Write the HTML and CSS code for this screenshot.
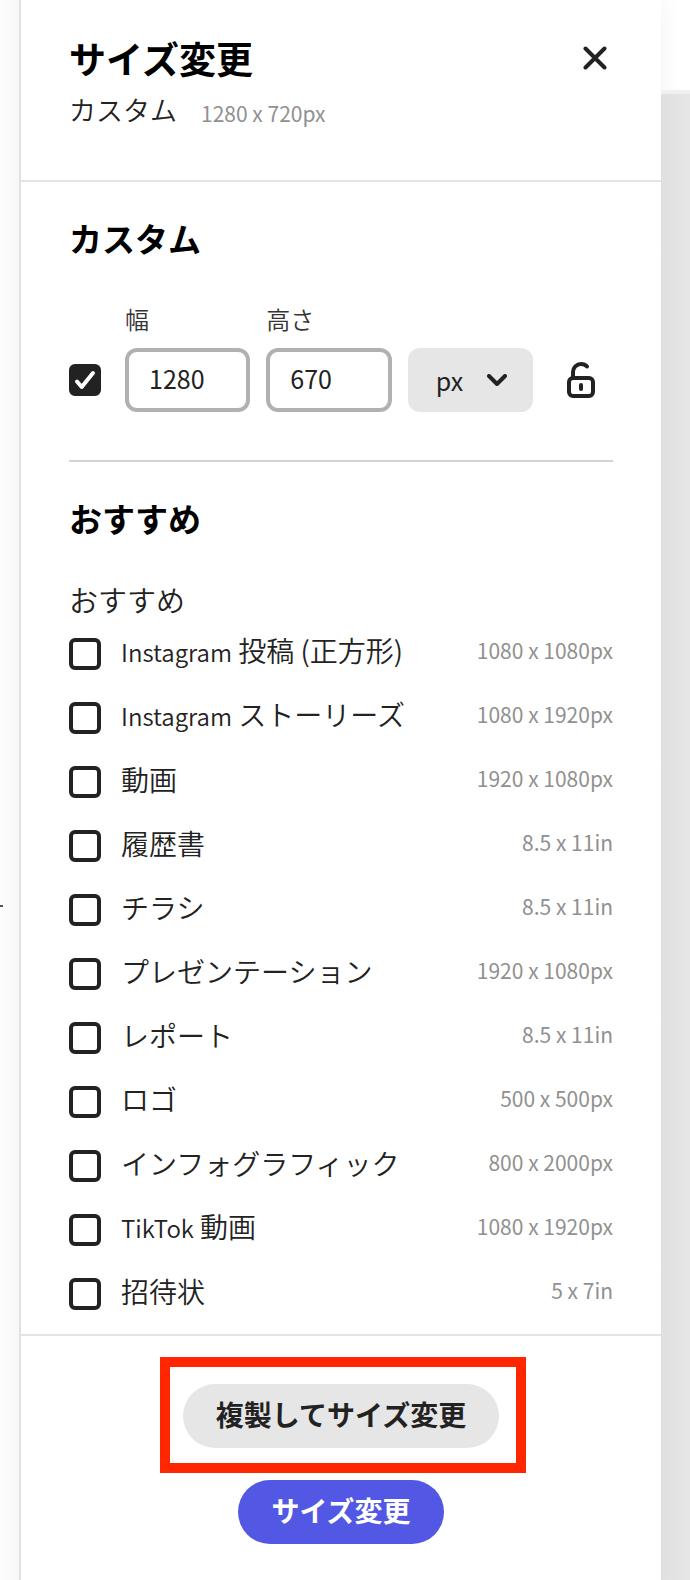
FILE: index.html
```html
<!DOCTYPE html>
<html lang="ja">

<head>
  <meta charset="UTF-8">
  <meta name="viewport" content="width=device-width, initial-scale=1.0">
  <title>サイズ変更</title>
  <link rel="stylesheet" href="styles.css">
</head>

<body>
  <div class="rail"><span class="rail-mark"></span></div>

  <main class="panel">
    <header class="panel-header">
      <div>
        <h1>サイズ変更</h1>
        <p class="current"><span>カスタム</span><span class="current-size">1280 x 720px</span></p>
      </div>
      <button type="button" class="close" aria-label="閉じる">
        <svg width="24" height="24" viewBox="0 0 24 24">
          <path d="M2.5 2.5 21.5 21.5M21.5 2.5 2.5 21.5" />
        </svg>
      </button>
    </header>

    <form class="panel-form">
      <div class="panel-body">
        <section class="custom">
          <h2>カスタム</h2>
          <div class="custom-row">
            <span class="check">
              <input type="checkbox" aria-label="カスタム" checked>
              <svg width="32" height="32" viewBox="0 0 32 32">
                <path d="M8 17.5 12.7 23 24 9" />
              </svg>
            </span>
            <div class="field">
              <label for="width">幅</label>
              <input type="text" id="width" name="width" value="1280">
            </div>
            <div class="field">
              <label for="height">高さ</label>
              <input type="text" id="height" name="height" value="670">
            </div>
            <div class="unit">
              <select name="unit" aria-label="単位">
                <option>px</option>
                <option>in</option>
              </select>
              <svg width="20" height="12" viewBox="0 0 20 12">
                <path d="M2 2 10 10 18 2" />
              </svg>
            </div>
            <button type="button" class="lock" aria-label="縦横比を固定">
              <svg width="28" height="36" viewBox="0 0 28 36">
                <rect x="2" y="16" width="24" height="18" rx="4" />
                <path d="M6 15.5V10C6 5.5 9.5 2 14 2c2.600 0 4.500 0.800 6 2.500" />
                <path d="M14 23v4" />
              </svg>
            </button>
          </div>
        </section>

        <section class="recommended">
          <h2>おすすめ</h2>
          <h3>おすすめ</h3>
          <ul class="sizes">
            <li><label><input type="checkbox"><span class="name"><span class="latin">Instagram</span> 投稿 (正方形)</span><span class="size">1080 x 1080px</span></label></li>
            <li><label><input type="checkbox"><span class="name"><span class="latin">Instagram</span> ストーリーズ</span><span class="size">1080 x 1920px</span></label></li>
            <li><label><input type="checkbox"><span class="name">動画</span><span class="size">1920 x 1080px</span></label></li>
            <li><label><input type="checkbox"><span class="name">履歴書</span><span class="size">8.5 x 11in</span></label></li>
            <li><label><input type="checkbox"><span class="name">チラシ</span><span class="size">8.5 x 11in</span></label></li>
            <li><label><input type="checkbox"><span class="name">プレゼンテーション</span><span class="size">1920 x 1080px</span></label></li>
            <li><label><input type="checkbox"><span class="name">レポート</span><span class="size">8.5 x 11in</span></label></li>
            <li><label><input type="checkbox"><span class="name">ロゴ</span><span class="size">500 x 500px</span></label></li>
            <li><label><input type="checkbox"><span class="name">インフォグラフィック</span><span class="size">800 x 2000px</span></label></li>
            <li><label><input type="checkbox"><span class="name"><span class="latin">TikTok</span> 動画</span><span class="size">1080 x 1920px</span></label></li>
            <li><label><input type="checkbox"><span class="name">招待状</span><span class="size">5 x 7in</span></label></li>
          </ul>
        </section>
      </div>

      <footer class="panel-footer">
        <div class="highlight">
          <button type="button" class="btn btn-secondary">複製してサイズ変更</button>
        </div>
        <button type="button" class="btn btn-primary">サイズ変更</button>
      </footer>
    </form>
  </main>

  <div class="canvas"></div>
</body>

</html>
```

FILE: styles.css
```css
* {
  box-sizing: border-box;
}

body {
  display: flex;
  min-height: 100vh;
  margin: 0;
  background-color: #fff;
  color: #222;
  font-family: "Noto Sans CJK JP", sans-serif;
  font-size: 28px;
}

h1,
h2,
h3,
p,
ul {
  margin: 0;
  padding: 0;
}

svg {
  display: block;
  fill: none;
  stroke: #222;
  stroke-width: 4;
  stroke-linecap: round;
  stroke-linejoin: round;
}

button,
input,
select {
  margin: 0;
  font-family: inherit;
  color: inherit;
}

/* page behind the panel */
.rail {
  position: relative;
  flex: 0 0 19px;
  background: linear-gradient(to right, #fdfdfd, #f8f8f8);
}

.rail-mark {
  position: absolute;
  top: 905px;
  left: 0;
  width: 3px;
  height: 2px;
  background-color: #555;
}

.canvas {
  flex: 0 0 29px;
  margin-top: 90px;
  border-top: 4px solid #f0f0f0;
  background: linear-gradient(to right, #e0e0e0, #e6e6e6);
}

.panel {
  flex: 1;
  border-left: 2px solid #e1e1e1;
  background-color: #fff;
  box-shadow: 0 0 24px rgba(0, 0, 0, 0.06);
}

.panel-header {
  display: flex;
  justify-content: space-between;
  align-items: flex-start;
  padding: 34px 48px 50px;
  border-bottom: 2px solid #e4e4e4;
}

h1 {
  font-size: 37px;
  font-weight: 700;
  line-height: 48px;
  color: #000;
}

.current {
  display: flex;
  align-items: center;
  gap: 24px;
  height: 40px;
  margin-top: 8px;
  font-size: 27px;
  font-weight: 350;
  line-height: 40px;
}

.current-size {
  padding-top: 6px;
  font-size: 21px;
  font-weight: 400;
  color: #909090;
}

.close {
  margin: 12px 6px 0 0;
  padding: 0;
  border: none;
  background: none;
  cursor: pointer;
}

.panel-body {
  padding: 0 48px;
}

h2 {
  margin-bottom: 42px;
  font-size: 33px;
  font-weight: 700;
  line-height: 44px;
  color: #000;
}

h3 {
  margin-bottom: 6px;
  font-size: 29px;
  font-weight: 350;
  line-height: 34px;
}

.custom {
  padding: 34px 0 48px;
  border-bottom: 2px solid #d3d3d3;
}

.custom-row {
  display: flex;
  align-items: flex-end;
  gap: 16px;
}

input[type="checkbox"] {
  display: block;
  flex: none;
  width: 32px;
  height: 32px;
  appearance: none;
  border: 4px solid #222;
  border-radius: 6px;
  background-color: #fff;
}

input[type="checkbox"]:checked {
  background-color: #222;
}

.check {
  position: relative;
  margin: 0 8px 16px 0;
}

.check svg {
  position: absolute;
  top: 0;
  left: 0;
  stroke: #fff;
  pointer-events: none;
}

.field,
.unit {
  flex: 1;
  min-width: 0;
}

.field label {
  display: block;
  margin-bottom: 12px;
  font-size: 24px;
  font-weight: 350;
  line-height: 34px;
  color: #333;
}

.field input {
  display: block;
  width: 100%;
  height: 64px;
  padding: 0 20px 4px;
  border: 4px solid #b1b1b1;
  border-radius: 12px;
  font-size: 25px;
}

.unit {
  position: relative;
}

.unit select {
  display: block;
  width: 100%;
  height: 64px;
  padding: 0 28px;
  appearance: none;
  border: none;
  border-radius: 12px;
  background-color: #e6e6e6;
  font-size: 25px;
}

.unit svg {
  position: absolute;
  top: 26px;
  right: 26px;
  pointer-events: none;
}

.lock {
  margin: 0 18px 14px;
  padding: 0;
  border: none;
  background: none;
  cursor: pointer;
}

.recommended {
  padding: 34px 0 8px;
}

.sizes {
  list-style: none;
}

.sizes label {
  display: flex;
  align-items: center;
  height: 64px;
}

.name {
  flex: 1;
  margin-left: 20px;
  padding-bottom: 6px;
  font-weight: 350;
  line-height: 40px;
}

.latin {
  font-size: 24px;
}

.size {
  padding-bottom: 8px;
  font-size: 21px;
  line-height: 32px;
  color: #909090;
}

.panel-footer {
  display: flex;
  flex-direction: column;
  align-items: center;
  gap: 32px;
  padding: 48px 48px 36px;
  border-top: 2px solid #e4e4e4;
}

.btn {
  display: block;
  height: 64px;
  padding: 0 33px 4px;
  border: none;
  border-radius: 32px;
  font-size: 28px;
  font-weight: 700;
  cursor: pointer;
}

.btn-secondary {
  background-color: #e6e6e6;
}

.btn-primary {
  background-color: #5258e4;
  color: #fff;
}

/* red frame drawn over the duplicate button */
.highlight {
  position: relative;
}

.highlight::after {
  content: "";
  position: absolute;
  inset: -27px -27px -25px -23px;
  border: 10px solid #ff2600;
  pointer-events: none;
}
```
